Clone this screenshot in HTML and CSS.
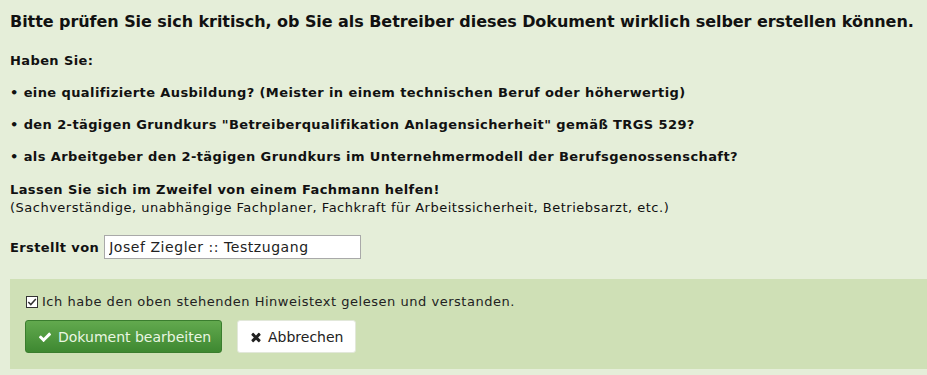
FILE: index.html
```html
<!DOCTYPE html>
<html lang="de">
<head>
	<meta charset="UTF-8">
	<title>Dokument bearbeiten</title>
	<link rel="stylesheet" href="styles.css">
</head>
<body>
	<div class="page">
		<h1>Bitte prüfen Sie sich kritisch, ob Sie als Betreiber dieses Dokument wirklich selber erstellen können.</h1>
		<p class="strong">Haben Sie:</p>
		<p class="strong">&bull; eine qualifizierte Ausbildung? (Meister in einem technischen Beruf oder höherwertig)</p>
		<p class="strong">&bull; den 2-tägigen Grundkurs "Betreiberqualifikation Anlagensicherheit" gemäß TRGS 529?</p>
		<p class="strong">&bull; als Arbeitgeber den 2-tägigen Grundkurs im Unternehmermodell der Berufsgenossenschaft?</p>
		<p class="hint">
			<b>Lassen Sie sich im Zweifel von einem Fachmann helfen!</b><br>
			(Sachverständige, unabhängige Fachplaner, Fachkraft für Arbeitssicherheit, Betriebsarzt, etc.)
		</p>
		<div class="author">
			<label for="author">Erstellt von</label>
			<input type="text" id="author" value="Josef Ziegler :: Testzugang">
		</div>
		<div class="confirm">
			<label class="check">
				<svg class="box" width="12" height="12" viewBox="0 0 12 12">
					<rect x="0.5" y="0.5" width="11" height="11" fill="#fff" stroke="#333"/>
					<path d="M2.3 6 L4.8 8.6 L9.8 3" fill="none" stroke="#333" stroke-width="1.5"/>
				</svg>
				<span>Ich habe den oben stehenden Hinweistext gelesen und verstanden.</span>
			</label>
			<div class="buttons">
				<a href="javascript:;" class="btn btn-ok">
					<svg class="icon" width="14" height="14" viewBox="0 0 1792 1792"><path fill="#fff" d="M1671 566q0 40-28 68l-724 724-136 136q-28 28-68 28t-68-28l-136-136-362-362q-28-28-28-68t28-68l136-136q28-28 68-28t68 28l294 295 656-657q28-28 68-28t68 28l136 136q28 28 28 68z"/></svg>
					Dokument bearbeiten
				</a>
				<a href="javascript:;" class="btn btn-cancel">
					<svg class="icon" width="12" height="14" viewBox="0 0 1408 1792"><path fill="#222" d="M1298 1322q0 40-28 68l-136 136q-28 28-68 28t-68-28l-294-294-294 294q-28 28-68 28t-68-28l-136-136q-28-28-28-68t28-68l294-294-294-294q-28-28-28-68t28-68l136-136q28-28 68-28t68 28l294 294 294-294q28-28 68-28t68 28l136 136q28 28 28 68t-28 68l-294 294 294 294q28 28 28 68z"/></svg>
					Abbrechen
				</a>
			</div>
		</div>
	</div>
</body>
</html>
```

FILE: styles.css
```css
* {
	margin: 0;
	padding: 0;
	box-sizing: border-box;
}
body {
	background-color: #e5eed9;
	color: #111;
	font-family: "DejaVu Sans", Verdana, sans-serif;
	font-size: 13px;
	letter-spacing: 0.5px;
}

.page {
	padding: 12px 0 0 10px;
}

h1 {
	font-size: 16px;
	line-height: 20px;
	font-weight: bold;
	letter-spacing: -0.06px;
	margin-bottom: 21px;
}

p {
	line-height: 16px;
	margin-bottom: 16px;
}
.strong,
b {
	font-weight: bold;
	letter-spacing: 0.4px;
}
.hint {
	line-height: 18px;
	margin-bottom: 18px;
}

.author {
	display: flex;
	align-items: center;
	gap: 5px;
	margin-bottom: 20px;
}
.author label {
	font-weight: bold;
	letter-spacing: 0.4px;
}
.author input {
	width: 257px;
	height: 24px;
	padding: 0 4px;
	border: 1px solid #a9a9a9;
	background: #fff;
	color: #222;
	font-family: "DejaVu Sans", Verdana, sans-serif;
	font-size: 14px;
	letter-spacing: 0.55px;
}

.confirm {
	background-color: #cfe0b6;
	padding: 15px 15px 16px;
}
.check {
	display: flex;
	align-items: center;
	gap: 4px;
	line-height: 16px;
	padding-left: 1px;
	color: #222;
	letter-spacing: 0.52px;
}
.check .box,
.btn .icon {
	flex-shrink: 0;
}
.buttons {
	display: flex;
	gap: 15px;
	margin-top: 10px;
}
.btn {
	display: flex;
	align-items: center;
	gap: 6px;
	height: 33px;
	padding: 0 12px;
	border-radius: 3px;
	font-size: 14px;
	letter-spacing: 0;
	white-space: nowrap;
	text-decoration: none;
}
.btn-ok {
	width: 197px;
	color: #eaf6e2;
	background: linear-gradient(#62a94e, #3e8831);
	border: 1px solid #3a7d2e;
}
.btn-cancel {
	width: 119px;
	color: #222;
	background: #fff;
	border: 1px solid #e2e8da;
}
```
